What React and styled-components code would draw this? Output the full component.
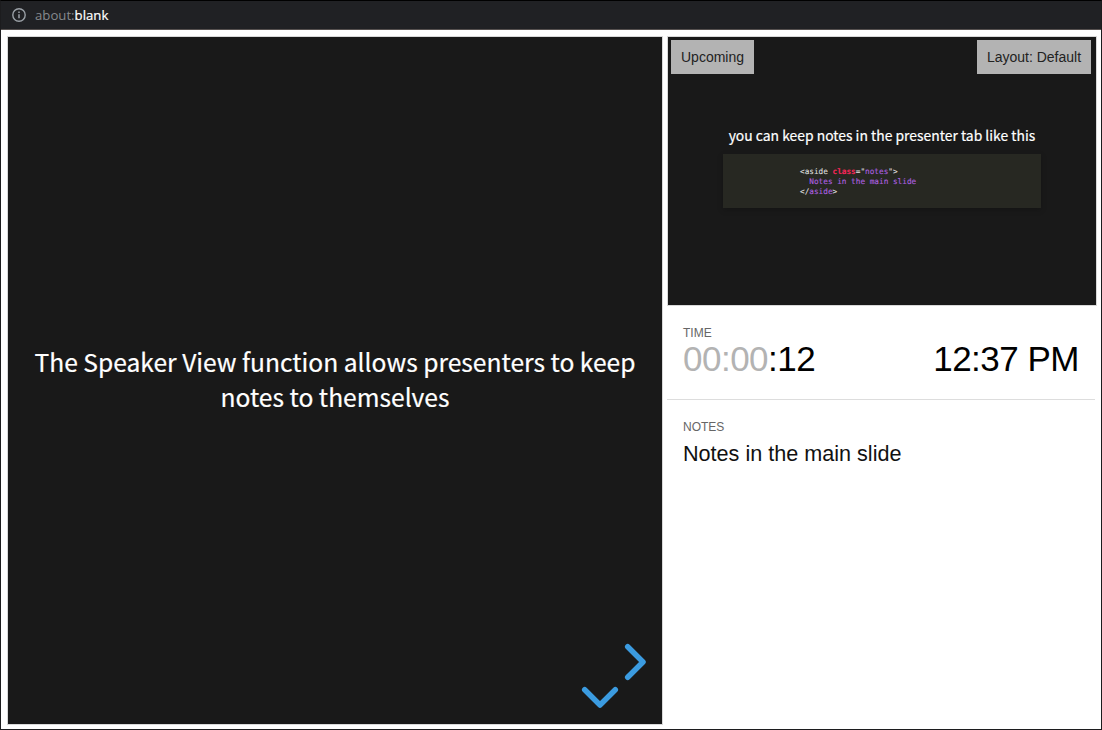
import React from "react";
import styled, { createGlobalStyle } from "styled-components";

const Global = createGlobalStyle`
  *, *::before, *::after { box-sizing: border-box; }
  html, body { margin: 0; padding: 0; overflow: hidden; background: #fff; }
`;

const Window = styled.div`
  width: 1102px;
  height: 730px;
  display: flex;
  flex-direction: column;
  background: #fff;
  border: 1px solid #1c1c1e;
  border-top-color: #000;
  font-family: "Liberation Sans", Arial, sans-serif;
`;

const AddressBar = styled.header`
  flex: none;
  height: 29px;
  display: flex;
  align-items: center;
  gap: 9px;
  padding-left: 11px;
  background: #202124;
  border-bottom: 1px solid #55504f;
  color: #9aa0a6;
`;

const Address = styled.span`
  font: 13.2px/18px "Open Sans", sans-serif;
  color: #85898d;
`;

const Host = styled.span`
  color: #fff;
  -webkit-text-stroke: 0.2px #fff;
`;

const Body = styled.main`
  flex: 1;
  min-height: 0;
  display: flex;
  gap: 4px;
  padding: 6px 4px 4px 6px;
`;

const Slide = styled.section`
  position: relative;
  flex: none;
  width: ${(p) => p.$w}px;
  height: ${(p) => p.$h}px;
  background: #191919;
  border: 1px solid #d9d9d9;
  color: #fff;
  font-family: "Noto Sans CJK SC", "Open Sans", sans-serif;
`;

const SlideTitle = styled.h1`
  margin: 0;
  padding-top: 307px;
  font-size: 24.62px;
  line-height: 35px;
  font-weight: 400;
  text-align: center;
  white-space: nowrap;
  -webkit-text-stroke: 0.2px #fff;
`;

const Arrows = styled.svg`
  position: absolute;
  right: 12px;
  bottom: 12px;
  display: block;
`;

const Sidebar = styled.aside`
  flex: none;
  width: 430px;
  display: flex;
  flex-direction: column;
`;

const Tag = styled.div`
  position: absolute;
  top: 3px;
  ${(p) => p.$side}: ${(p) => (p.$side === "left" ? 3 : 5)}px;
  width: ${(p) => p.$w}px;
  height: 34px;
  background: #b3b3b3;
  color: #222;
  font: 14px/34px "Liberation Sans", Arial, sans-serif;
  text-align: center;
  white-space: nowrap;
`;

const PreviewText = styled.p`
  margin: 0;
  padding-top: 88px;
  font-size: 13.9px;
  line-height: 20px;
  text-align: center;
  white-space: nowrap;
  -webkit-text-stroke: 0.2px #fff;
`;

const CodeBlock = styled.pre`
  margin: 9px auto 0;
  width: 318px;
  height: 54px;
  padding: 13px 0 0 77px;
  background: #272822;
  box-shadow: 0 2px 6px rgba(0, 0, 0, 0.2);
  color: #ddd;
  font: 400 7.72px/10px "DejaVu Sans Mono", monospace;
  -webkit-text-stroke: 0.1px;
`;

const Token = styled.span`
  color: ${(p) => p.$c};
  font-weight: ${(p) => (p.$bold ? 700 : 400)};
`;

const Panel = styled.section`
  padding: 0 16px;
  height: ${(p) => p.$h}px;
  width: 428px;
  border-bottom: ${(p) => (p.$line ? "1px solid #ddd" : "0")};
`;

const Label = styled.h4`
  margin: 0;
  padding-top: 20px;
  font-size: 12px;
  line-height: 14px;
  font-weight: 400;
  color: #666;
`;

const Clocks = styled.div`
  display: flex;
  justify-content: space-between;
  font-size: 35px;
  letter-spacing: -0.5px;
  line-height: 38px;
  color: #000;
`;

const Muted = styled.span`
  color: #b3b3b3;
`;

const Notes = styled.p`
  margin: 6px 0 0;
  font-size: 21.6px;
  line-height: 28px;
  color: #111;
`;

export default function App() {
  return (
    <>
      <Global />
      <Window>
        <AddressBar>
          <svg width="14" height="14" viewBox="0 0 14 14" fill="none" stroke="#9aa0a6">
            <circle cx="7" cy="7" r="6.2" strokeWidth="1.4" />
            <path d="M7 6.2v4.1M7 3.6v1.5" strokeWidth="1.5" />
          </svg>
          <Address>
            about:<Host>blank</Host>
          </Address>
        </AddressBar>
        <Body>
          <Slide $w={656} $h={689}>
            <SlideTitle>
              The Speaker View function allows presenters to keep
              <br />
              notes to themselves
            </SlideTitle>
            <Arrows
              width="70"
              height="70"
              viewBox="580 642 70 70"
              fill="none"
              stroke="#3b9be0"
              strokeWidth="5.5"
              strokeLinecap="round"
              strokeLinejoin="round"
            >
              <path d="M627.7 646.7L643 662L627.7 677.3" />
              <path d="M584.7 689.7L600 705L615.3 689.7" />
            </Arrows>
          </Slide>
          <Sidebar>
            <Slide $w={430} $h={270}>
              <Tag $side="left" $w={83}>Upcoming</Tag>
              <Tag $side="right" $w={114}>Layout: Default</Tag>
              <PreviewText>you can keep notes in the presenter tab like this</PreviewText>
              <CodeBlock>
                &lt;aside <Token $c="#f92659" $bold>class</Token>="<Token $c="#ae60e0">notes</Token>"&gt;{"\n"}
                <Token $c="#ae60e0">{"  Notes in the main slide"}</Token>{"\n"}
                &lt;/<Token $c="#ae60e0">aside</Token>&gt;
              </CodeBlock>
            </Slide>
            <Panel $h={94} $line>
              <Label>TIME</Label>
              <Clocks>
                <span>
                  <Muted>00:00</Muted>:12
                </span>
                <span>12:37 PM</span>
              </Clocks>
            </Panel>
            <Panel $h={300}>
              <Label>NOTES</Label>
              <Notes>Notes in the main slide</Notes>
            </Panel>
          </Sidebar>
        </Body>
      </Window>
    </>
  );
}
